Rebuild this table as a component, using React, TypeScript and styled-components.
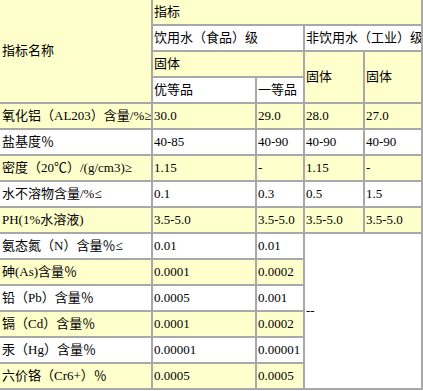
import { FC } from 'react';
import styled, { createGlobalStyle } from 'styled-components';

type Tone = 'yellow' | 'white';

const COLORS = {
    yellow: '#ffffcc',
    white: '#ffffff',
    line: '#a8a8a8',
    text: '#000000'
};

const GlobalStyle = createGlobalStyle`
  * {
    box-sizing: border-box;
  }
  body {
    margin: 0;
    background: #ffffff;
    font-family: "Liberation Serif", "Noto Sans CJK SC", serif;
  }
`;

const Table = styled.table`
  width: 423px;
  table-layout: fixed;
  border-collapse: separate;
  border-spacing: 0;
  font-size: 13px;
  line-height: 16px;
  color: ${COLORS.text};
`;

const Cell = styled.td<{ $tone: Tone }>`
  height: 26px;
  padding: 0 0 0 1px;
  border-right: 2px solid ${COLORS.line};
  border-bottom: 2px solid ${COLORS.line};
  background: ${(props) => COLORS[props.$tone]};
  white-space: nowrap;
  overflow: hidden;
  vertical-align: middle;
  text-align: left;
`;

const NameCell = styled(Cell)`
  padding-left: 2px;
`;

interface SpecRow {
    name: string;
    values: string[];
}

const specRows: SpecRow[] = [
    { name: '氧化铝（AL203）含量/%≥', values: ['30.0', '29.0', '28.0', '27.0'] },
    { name: '盐基度％', values: ['40-85', '40-90', '40-90', '40-90'] },
    { name: '密度（20℃）/(g/cm3)≥', values: ['1.15', '-', '1.15', '-'] },
    { name: '水不溶物含量/%≤', values: ['0.1', '0.3', '0.5', '1.5'] },
    { name: 'PH(1%水溶液)', values: ['3.5-5.0', '3.5-5.0', '3.5-5.0', '3.5-5.0'] },
    { name: '氨态氮（N）含量％≤', values: ['0.01', '0.01'] },
    { name: '砷(As)含量％', values: ['0.0001', '0.0002'] },
    { name: '铅（Pb）含量％', values: ['0.0005', '0.001'] },
    { name: '镉（Cd）含量％', values: ['0.0001', '0.0002'] },
    { name: '汞（Hg）含量％', values: ['0.00001', '0.00001'] },
    { name: '六价铬（Cr6+）％', values: ['0.0005', '0.0005'] }
];

// first row without the industrial values gets the merged "--" cell
const mergedStart = specRows.findIndex((row) => row.values.length < 4);

const App: FC = () => (
    <>
        <GlobalStyle />
        <Table>
            <colgroup>
                <col style={{ width: 153 }} />
                <col style={{ width: 104 }} />
                <col style={{ width: 48 }} />
                <col style={{ width: 60 }} />
                <col style={{ width: 58 }} />
            </colgroup>
            <tbody>
                <tr>
                    <NameCell $tone="yellow" rowSpan={4}>指标名称</NameCell>
                    <Cell $tone="yellow" colSpan={4}>指标</Cell>
                </tr>
                <tr>
                    <Cell $tone="white" colSpan={2}>饮用水（食品）级</Cell>
                    <Cell $tone="white" colSpan={2}>非饮用水（工业）级</Cell>
                </tr>
                <tr>
                    <Cell $tone="yellow" colSpan={2}>固体</Cell>
                    <Cell $tone="yellow" rowSpan={2}>固体</Cell>
                    <Cell $tone="yellow" rowSpan={2}>固体</Cell>
                </tr>
                <tr>
                    <Cell $tone="white">优等品</Cell>
                    <Cell $tone="white">一等品</Cell>
                </tr>
                {specRows.map((row, index) => {
                    const tone: Tone = index % 2 === 0 ? 'yellow' : 'white';
                    return (
                        <tr key={row.name}>
                            <NameCell $tone={tone}>{row.name}</NameCell>
                            {row.values.map((value, i) => (
                                <Cell key={i} $tone={tone}>{value}</Cell>
                            ))}
                            {index === mergedStart && (
                                <Cell $tone="white" colSpan={2} rowSpan={specRows.length - mergedStart}>
                                    --
                                </Cell>
                            )}
                        </tr>
                    );
                })}
            </tbody>
        </Table>
    </>
);

export default App;
